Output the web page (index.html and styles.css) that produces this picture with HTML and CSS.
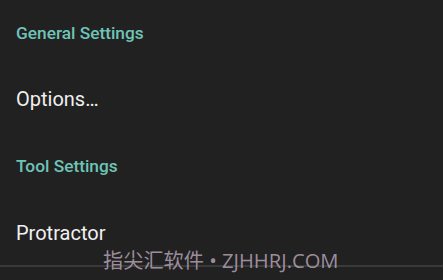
FILE: index.html
```html
<!DOCTYPE html>
<html>
<head>
<meta charset="utf-8">
<link rel="stylesheet" href="styles.css">
</head>
<body>
<div class="list">
  <div class="category">General Settings</div>
  <div class="item">Options…</div>
  <div class="category">Tool Settings</div>
  <div class="item">Protractor</div>
  <div class="divider"></div>
</div>
<div class="watermark">指尖汇软件 • ZJHHRJ.COM</div>
</body>
</html>
```
FILE: styles.css
```css
html, body {
  margin: 0;
  padding: 0;
  background: #212121;
  width: 443px;
  height: 280px;
  overflow: hidden;
  font-family: Roboto, "Noto Sans", sans-serif;
}
.list {
  display: flex;
  flex-direction: column;
}
.category {
  height: 65px;
  display: flex;
  align-items: center;
  padding-left: 16px;
  color: #6fc4b8;
  font-size: 17.3px;
  font-weight: 500;
}
.item + .category {
  height: 67px;
}
.item {
  height: 67px;
  display: flex;
  align-items: center;
  padding-left: 16px;
  color: #f0f0f0;
  font-size: 20px;
}
.divider {
  height: 2px;
  margin-top: -1px;
  background: #3a3a3a;
}
.watermark {
  position: absolute;
  left: 103px;
  top: 245px;
  color: rgba(190, 170, 190, 0.8);
  font-family: "Open Sans", "Noto Sans CJK SC", sans-serif;
  font-size: 20.2px;
  white-space: nowrap;
}
```
